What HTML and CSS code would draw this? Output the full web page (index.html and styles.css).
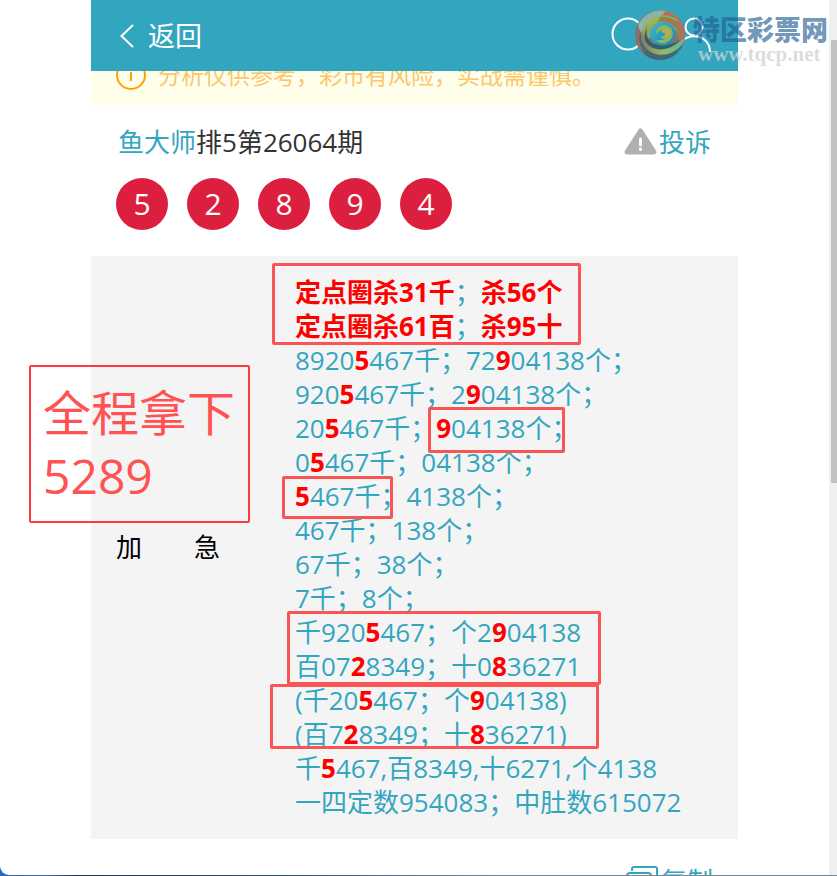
FILE: index.html
```html
<!DOCTYPE html>
<html lang="zh-CN">
<head>
<meta charset="utf-8">
<meta name="viewport" content="width=device-width, initial-scale=1">
<title>鱼大师排5第26064期</title>
<link rel="stylesheet" href="styles.css">
</head>
<body>
<div class="window">
  <div class="viewport">
    <main class="page">
      <header class="topbar">
        <a class="back" href="#">
          <svg width="14" height="24" viewBox="0 0 14 24" aria-hidden="true"><path d="M13 1 1.500 12 13 23"/></svg>
          <span>返回</span>
        </a>
        <nav class="tools">
          <button class="tool" type="button" aria-label="搜索">
            <svg width="38" height="38" viewBox="0 0 38 38"><circle cx="18" cy="17" r="15.500"/><path d="M29 28l8 7"/></svg>
          </button>
          <button class="tool" type="button" aria-label="我的">
            <svg width="36" height="38" viewBox="0 0 36 38"><circle cx="18" cy="10" r="8.500"/><path d="M2 35C2 14 34 14 34 35"/></svg>
          </button>
        </nav>
      </header>

      <p class="notice">
        <svg width="30" height="30" viewBox="0 0 30 30" aria-hidden="true"><circle cx="15" cy="15" r="14"/><path d="M15 7v2M15 12v9"/></svg>
        <span>分析仅供参考，彩市有风险，实战需谨慎。</span>
      </p>

      <section class="issue">
        <div class="issue-head">
          <h1><a href="#">鱼大师</a>排5第26064期</h1>
          <a class="report" href="#">
            <svg width="33" height="28" viewBox="0 0 33 28" aria-hidden="true"><path class="tri" d="M16.500 3 30 24H3z"/><path class="mark" d="M16.500 11v6M16.500 21v.500"/></svg>
            <span>投诉</span>
          </a>
        </div>
        <ol class="balls"><li>5</li><li>2</li><li>8</li><li>9</li><li>4</li></ol>
      </section>

      <section class="plan">
        <h2>加　　急</h2>
        <div class="lines">
          <p><b>定点圈杀31千</b>；<b>杀56个</b></p>
          <p><b>定点圈杀61百</b>；<b>杀95十</b></p>
          <p>8920<b>5</b>467千；72<b>9</b>04138个；</p>
          <p>920<b>5</b>467千；2<b>9</b>04138个；</p>
          <p>20<b>5</b>467千；<b>9</b>04138个；</p>
          <p>0<b>5</b>467千；04138个；</p>
          <p><b>5</b>467千；4138个；</p>
          <p>467千；138个；</p>
          <p>67千；38个；</p>
          <p>7千；8个；</p>
          <p>千920<b>5</b>467；个2<b>9</b>04138</p>
          <p>百07<b>2</b>8349；十0<b>8</b>36271</p>
          <p>(千20<b>5</b>467；个<b>9</b>04138)</p>
          <p>(百7<b>2</b>8349；十<b>8</b>36271)</p>
          <p>千<b>5</b>467,百8349,十6271,个4138</p>
          <p>一四定数954083；中肚数615072</p>
        </div>
        <div class="frame frame-kill"></div>
        <div class="frame frame-unit"></div>
        <div class="frame frame-thousand"></div>
        <div class="frame frame-seven"></div>
        <div class="frame frame-six"></div>
        <div class="callout">全程拿下<br>5289</div>
      </section>

      <footer class="actions">
        <button class="copy" type="button">
          <svg width="33" height="30" viewBox="0 0 33 30" aria-hidden="true"><path d="M6 5V3a2 2 0 0 1 2-2h21a2 2 0 0 1 2 2v18a2 2 0 0 1-2 2h-2"/><rect x="1" y="7" width="24" height="22" rx="3"/><path d="M7 15h12M7 21h12"/></svg>
          <span>复制</span>
        </button>
      </footer>
    </main>
  </div>
  <div class="scrollbar"><div class="thumb"></div></div>

  <div class="watermark">
    <svg width="52" height="52" viewBox="0 0 52 52" aria-hidden="true">
      <defs>
        <clipPath id="disc"><circle cx="26" cy="26" r="25"/></clipPath>
        <linearGradient id="green" x1="0" y1="1" x2="1" y2="0"><stop offset="0" stop-color="#8f8f62"/><stop offset=".5" stop-color="#a9b845"/><stop offset="1" stop-color="#72c04a"/></linearGradient>
        <linearGradient id="blue" x1="0" y1="0" x2="1" y2="1"><stop offset="0" stop-color="#6fb78d"/><stop offset=".5" stop-color="#1f9fd0"/><stop offset="1" stop-color="#2f86a8"/></linearGradient>
        <linearGradient id="lower" x1="0" y1="0" x2="1" y2="0"><stop offset="0" stop-color="#8f7a60"/><stop offset=".5" stop-color="#9dba5e"/><stop offset="1" stop-color="#54b5a8"/></linearGradient>
      </defs>
      <g clip-path="url(#disc)">
        <rect width="52" height="52" fill="#8a7067"/>
        <path d="M4 17C10 0 34-4 45 9 31 3 15 7 8 26z" fill="#8fb5a6"/>
        <path d="M34 0C53 6 57 28 47 42 50 26 43 12 27 7z" fill="#bd6d56"/>
        <path d="M7 26C11 7 31 1 45 12 30 9 19 14 14 28z" fill="url(#green)"/>
        <path d="M26 8C42 5 52 21 46 36 45 22 37 13 24 13z" fill="#a07a52"/>
        <path d="M14 30C12 12 35 4 45 25 36 13 25 14 20 23z" fill="#74b86a"/>
        <path d="M3 25C6 43 22 52 41 47L31 54 4 48-2 30z" fill="#8f6f66"/>
        <path d="M7 22C4 40 26 52 50 35L45 53 20 53C9 46 2 33 7 22z" fill="#3f6670"/>
        <path d="M9 20C5 36 25 49 51 29 46 46 22 52 11 38 6 32 6 26 9 20z" fill="url(#lower)"/>
        <path d="M13 19C9 33 25 43 46 31 34 45 15 42 11 31 10 26 11 22 13 19z" fill="#2f5f69"/>
        <path d="M16 21C20 9 38 11 41 22 42 35 30 40 21 34 16 30 15 25 16 21z" fill="url(#blue)"/>
        <path d="M22 26C21 17 31 13 37 19 41 25 38 32 31 34 26 35 23 33 22 31 29 32 34 29 34 24 32 19 25 20 22 26z" fill="#8cb95c"/>
        <path d="M27 23C29 17 37 19 36 25 34 30 28 30 26 28 31 28 34 24 27 23z" fill="#c0ae46"/>
      </g>
    </svg>
    <div class="brand"><strong>特区彩票网</strong><span>www.tqcp.net</span></div>
  </div>
</div>
</body>
</html>
```

FILE: styles.css
```css
* {
  box-sizing: border-box;
}

body,
h1,
h2,
p,
ol {
  margin: 0;
  padding: 0;
}

body {
  height: 100vh;
  padding-bottom: 1px;
  overflow: hidden;
  background: linear-gradient(90deg, #2468c0 0, #3d6ba5 50px, #2c3550 75px, #34507c 280px, #7b8794 500px);
  color: #333;
  font: 26px/34px "Open Sans", "Noto Sans CJK SC", sans-serif;
}

a {
  color: #33a6bf;
  text-decoration: none;
}

button {
  padding: 0;
  border: 0;
  background: none;
  color: inherit;
  font: inherit;
}

svg {
  display: block;
  flex: none;
  fill: none;
  stroke: currentColor;
  stroke-width: 2;
}

.window {
  position: relative;
  display: flex;
  height: 100%;
  overflow: hidden;
  border-bottom-left-radius: 9px;
  background: #fff;
}

.viewport {
  flex: 1;
  overflow: hidden;
}

.page {
  max-width: 647px;
  margin: 0 auto;
}

.topbar {
  position: relative;
  z-index: 1;
  display: flex;
  align-items: center;
  justify-content: space-between;
  height: 71px;
  padding: 0 26px 0 29px;
  background: #33a6bf;
  color: #fff;
}

.back {
  display: flex;
  align-items: center;
  gap: 14px;
  color: #fff;
  font-size: 27px;
}

.tools {
  display: flex;
  gap: 28px;
}

.tools svg {
  stroke-width: 2;
}

.notice {
  display: flex;
  align-items: center;
  gap: 12px;
  height: 60px;
  margin-top: -26px;
  padding: 0 25px;
  background: #fffeeb;
  color: #ffa200;
  font-size: 23px;
}

.notice span {
  color: #fac76c;
}

.issue {
  padding: 20px 25px 26px;
}

.issue-head {
  display: flex;
  align-items: center;
  justify-content: space-between;
  padding: 0 2px;
}

h1,
h2 {
  font-size: 26px;
  font-weight: 400;
}

.report {
  display: flex;
  align-items: center;
  gap: 2px;
}

.tri {
  fill: #b0b0b0;
  stroke: #b0b0b0;
  stroke-width: 5;
  stroke-linejoin: round;
}

.mark {
  stroke: #fff;
  stroke-width: 3;
  stroke-linecap: round;
}

.balls {
  display: flex;
  gap: 19px;
  margin-top: 19px;
  list-style: none;
}

.balls li {
  width: 52px;
  height: 52px;
  border-radius: 50%;
  background: #dc1f3e;
  color: #fff;
  font-size: 30px;
  line-height: 52px;
  text-align: center;
}

.plan {
  position: relative;
  display: grid;
  grid-template-columns: 179px 1fr;
  align-items: center;
  padding: 19px 0 20px 25px;
  background: #f4f4f4;
}

h2 {
  color: #000;
}

.lines {
  color: #33a6bf;
  white-space: nowrap;
}

.lines b {
  color: #f00;
}

/* Hand-drawn marks laid over the plan */
.frame,
.callout {
  position: absolute;
  border: 3px solid #fb5454;
  border-radius: 2px;
}

.frame-kill {
  left: 181px;
  top: 7px;
  width: 309px;
  height: 82px;
}

.frame-unit {
  left: 337px;
  top: 151px;
  width: 137px;
  height: 46px;
}

.frame-thousand {
  left: 191px;
  top: 220px;
  width: 111px;
  height: 43px;
}

.frame-seven {
  left: 196px;
  top: 355px;
  width: 314px;
  height: 74px;
}

.frame-six {
  left: 179px;
  top: 428px;
  width: 329px;
  height: 65px;
}

.callout {
  left: -62px;
  top: 109px;
  width: 221px;
  height: 158px;
  padding: 14px 12px;
  border: 2px solid #fb3c3c;
  color: #ff5252;
  font-size: 48px;
  line-height: 63px;
  white-space: nowrap;
}

.actions {
  display: flex;
  justify-content: flex-end;
  padding: 25px 25px 0;
}

.copy {
  display: flex;
  align-items: center;
  gap: 2px;
  color: #33a6bf;
}

.scrollbar {
  width: 8px;
  padding: 40px 0 0 2px;
  background: #f0f0f0;
}

.thumb {
  height: 53%;
  background: #c1c1c1;
}

.watermark {
  position: absolute;
  z-index: 2;
  top: 9px;
  right: 9px;
  display: flex;
  gap: 7px;
}

.watermark svg {
  stroke: none;
  opacity: .95;
}

.brand {
  display: flex;
  flex-direction: column;
  padding-top: 7px;
}

.brand strong {
  color: rgba(32, 92, 145, .65);
  font-size: 27px;
  font-weight: 900;
  line-height: 28px;
}

.brand span {
  padding-left: 5px;
  color: rgba(205, 210, 212, .75);
  font: bold 21px/21px "Liberation Serif", serif;
}
```
